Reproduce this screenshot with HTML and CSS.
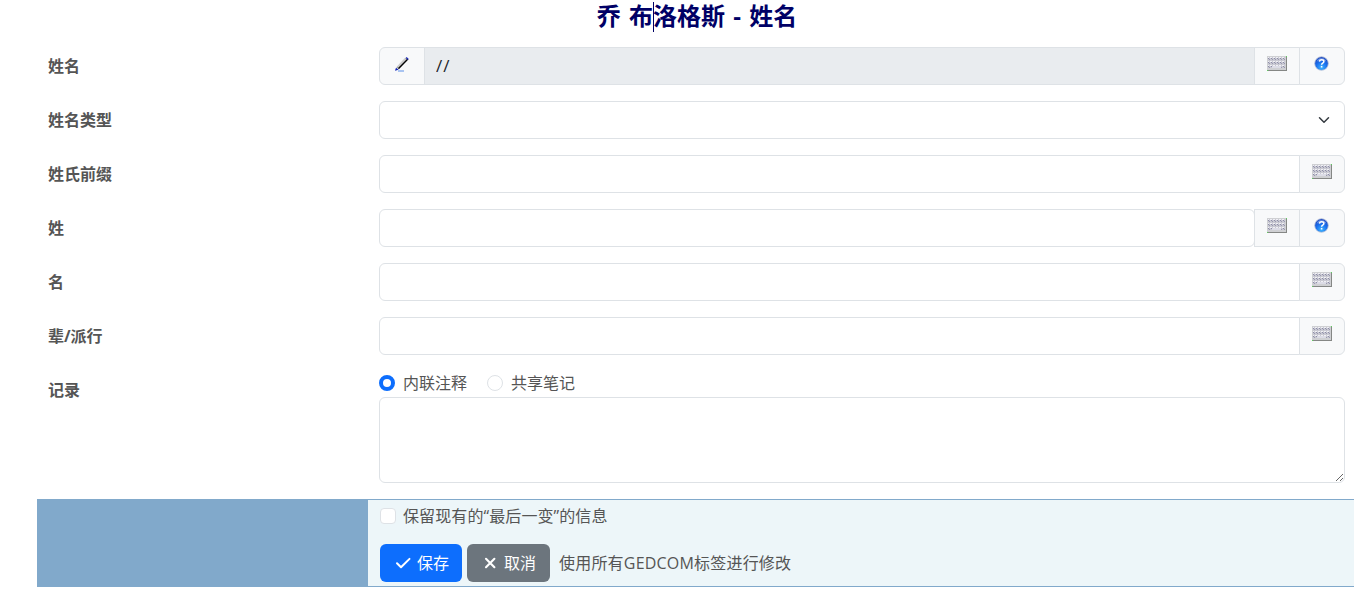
FILE: index.html
```html
<!DOCTYPE html>
<html lang="zh-Hans">
<head>
<meta charset="UTF-8">
<meta name="viewport" content="width=device-width, initial-scale=1.0">
<title>乔 布洛格斯 - 姓名</title>
<link rel="stylesheet" href="styles.css">
</head>
<body>
  <!-- shared icons -->
  <svg class="sprite" aria-hidden="true">
    <defs>
      <pattern id="keys" width="3" height="4" patternUnits="userSpaceOnUse">
        <rect width="3" height="4" fill="#c9c9d2"/>
        <rect x="0" y="1" width="2" height="1" fill="#f0f0f5"/>
        <rect x="1" y="2" width="1" height="1" fill="#8c8ca8"/>
        <rect x="2" y="3" width="1" height="1" fill="#9a9ab2"/>
      </pattern>
      <radialGradient id="ball" cx="50%" cy="80%" r="80%">
        <stop offset="0" stop-color="#3db4ff"/>
        <stop offset="0.5" stop-color="#1a70ee"/>
        <stop offset="1" stop-color="#1a40b8"/>
      </radialGradient>
    </defs>
    <symbol id="icon-keyboard" viewBox="0 0 20 15">
      <rect width="20" height="15" fill="#b4b5b4"/>
      <rect width="19" height="14" fill="#cfd0d3"/>
      <rect x="1" y="1" width="17" height="11" fill="url(#keys)"/>
      <rect x="5" y="10" width="9" height="2" fill="#dcdce6"/>
      <path d="M19.5 1v14M1 14.5h19" stroke="#858785" fill="none"/>
      <rect y="14" width="1" height="1" fill="#5fd35f"/>
      <rect x="19" width="1" height="1" fill="#5fd35f"/>
    </symbol>
    <symbol id="icon-help" viewBox="0 0 16 16">
      <circle cx="7.5" cy="7.5" r="6.8" fill="url(#ball)" stroke="#b4bfd6" stroke-width="0.8"/>
      <path d="M2.6 5.5a5.2 5.2 0 0 1 9.8 0q-4.9-2-9.8 0z" fill="#fff" opacity="0.3"/>
      <path d="M5.4 5.6Q5.6 3.8 7.7 3.8q2.2 0 2.2 1.7 0 1-1.2 1.7Q7.6 7.9 7.6 8.8" fill="none" stroke="#fff" stroke-width="1.5"/>
      <rect x="6.8" y="9.9" width="1.6" height="1.6" fill="#fff"/>
    </symbol>
  </svg>

  <div class="container">
    <h2 class="title">乔 布<span class="cursor"></span>洛格斯 - 姓名</h2>

    <form>
      <div class="row">
        <label class="label" for="name">姓名</label>
        <div class="field">
          <div class="group">
            <span class="addon">
              <svg class="pencil" width="16" height="16" viewBox="0 0 16 16">
                <path d="M3.6 12.3 12.7 2.8" stroke="#777" stroke-width="3"/>
                <path d="M3.4 11.4 11.8 2.6" stroke="#cfcfcf" stroke-width="1.6"/>
                <path d="M4.6 12.5 13.9 3.2" stroke="#000" stroke-width="1.2"/>
                <path d="M12.2 1.5l2.1 1.9" stroke="#1624b4" stroke-width="1.3"/>
                <path d="M1 14.8l1-3 2.6 2z" fill="#1021b8"/>
                <path d="M4 15h6" stroke="#5b8fe8" stroke-width="1"/>
              </svg>
            </span>
            <input class="control readonly" type="text" id="name" value="//" readonly>
            <span class="addon"><svg class="keyboard"><use href="#icon-keyboard"/></svg></span>
            <span class="addon"><svg class="help"><use href="#icon-help"/></svg></span>
          </div>
        </div>
      </div>

      <div class="row">
        <label class="label" for="type">姓名类型</label>
        <div class="field">
          <div class="group select">
            <select class="control rounded" id="type"><option></option></select>
            <svg class="chevron" width="16" height="12" viewBox="0 0 16 16"><path d="m2 5 6 6 6-6" fill="none" stroke="#343a40" stroke-width="2" stroke-linecap="round" stroke-linejoin="round"/></svg>
          </div>
        </div>
      </div>

      <div class="row">
        <label class="label" for="prefix">姓氏前缀</label>
        <div class="field">
          <div class="group">
            <input class="control" type="text" id="prefix">
            <span class="addon"><svg class="keyboard"><use href="#icon-keyboard"/></svg></span>
          </div>
        </div>
      </div>

      <div class="row">
        <label class="label" for="surname">姓</label>
        <div class="field">
          <div class="group">
            <input class="control rounded" type="text" id="surname">
            <span class="addon"><svg class="keyboard"><use href="#icon-keyboard"/></svg></span>
            <span class="addon"><svg class="help"><use href="#icon-help"/></svg></span>
          </div>
        </div>
      </div>

      <div class="row">
        <label class="label" for="given">名</label>
        <div class="field">
          <div class="group">
            <input class="control" type="text" id="given">
            <span class="addon"><svg class="keyboard"><use href="#icon-keyboard"/></svg></span>
          </div>
        </div>
      </div>

      <div class="row">
        <label class="label" for="generation">辈/派行</label>
        <div class="field">
          <div class="group">
            <input class="control" type="text" id="generation">
            <span class="addon"><svg class="keyboard"><use href="#icon-keyboard"/></svg></span>
          </div>
        </div>
      </div>

      <div class="row">
        <label class="label" for="note">记录</label>
        <div class="field">
          <div class="checks">
            <label class="check"><input type="radio" name="note-type" checked>内联注释</label>
            <label class="check"><input type="radio" name="note-type">共享笔记</label>
          </div>
          <textarea class="control" id="note" rows="3"></textarea>
        </div>
      </div>

      <div class="footer">
        <div class="footer-side"></div>
        <div class="footer-main">
          <label class="check"><input type="checkbox">保留现有的“最后一变”的信息</label>
          <div class="actions">
            <button class="btn btn-save" type="submit">
              <svg width="16" height="16" viewBox="0 0 16 16"><path d="M2 8.3l4 4 8.5-8.4" fill="none" stroke="#fff" stroke-width="2" stroke-linecap="round" stroke-linejoin="round"/></svg>
              保存
            </button>
            <button class="btn btn-cancel" type="button">
              <svg width="16" height="16" viewBox="0 0 16 16"><path d="M4 3.8l8.4 8.4M12.4 3.8 4 12.2" fill="none" stroke="#fff" stroke-width="2.1" stroke-linecap="round"/></svg>
              取消
            </button>
            <a class="all-tags">使用所有GEDCOM标签进行修改</a>
          </div>
        </div>
      </div>
    </form>
  </div>
</body>
</html>
```
FILE: styles.css
```css
* {
  box-sizing: border-box;
}

body {
  margin: 0;
  background: #fff;
  color: #555;
  font-family: "Open Sans", "Noto Sans CJK SC", sans-serif;
  font-size: 16px;
  line-height: 24px;
  overflow: hidden;
}

.sprite {
  position: absolute;
  width: 0;
  height: 0;
}

.container {
  width: 1320px;
  margin-left: 37px;
}

.title {
  height: 47px;
  margin: 0;
  padding-top: 1px;
  color: #006;
  font-size: 24px;
  line-height: 29px;
  font-weight: 700;
  text-align: center;
  word-spacing: 2px;
}

.cursor {
  display: inline-block;
  width: 1px;
  height: 30px;
  margin: -3px -1px 0 0;
  background: #006;
  vertical-align: -7px;
}

.row {
  display: flex;
  margin-bottom: 16px;
}

.label {
  width: 330px;
  padding: 7px 12px 7px 11px;
  font-weight: 700;
}

.field {
  width: 990px;
  padding: 0 12px;
}

.group {
  display: flex;
  height: 38px;
}

.control {
  display: block;
  flex: 1;
  width: 100%;
  min-width: 0;
  margin: 0;
  padding: 6px 12px;
  border: 1px solid #dee2e6;
  border-radius: 6px;
  background: #fff;
  color: #212529;
  font: inherit;
  outline: none;
}

.group .control:not(:last-child):not(.rounded) {
  border-top-right-radius: 0;
  border-bottom-right-radius: 0;
}

.group .control:not(:first-child) {
  border-top-left-radius: 0;
  border-bottom-left-radius: 0;
}

.group .readonly {
  padding-left: 11px;
  background: #e9ecef;
  font-size: 17px;
  letter-spacing: 1px;
}

.addon {
  display: flex;
  justify-content: center;
  width: 46px;
  padding-top: 8px;
  border: 1px solid #dee2e6;
  background: #f8f9fa;
}

.addon:first-child {
  margin-right: -1px;
  border-radius: 6px 0 0 6px;
}

.addon:not(:first-child) {
  margin-left: -1px;
}

.addon:last-child {
  border-radius: 0 6px 6px 0;
}

.keyboard {
  width: 20px;
  height: 15px;
}

.help {
  width: 16px;
  height: 16px;
}

.select {
  position: relative;
}

.select .control {
  appearance: none;
}

.chevron {
  position: absolute;
  top: 13px;
  right: 13px;
}

.checks {
  display: flex;
  gap: 20px;
  height: 26px;
}

.check {
  display: flex;
  align-items: flex-start;
}

.check input {
  appearance: none;
  width: 16px;
  height: 16px;
  margin: 4px 8px 0 0;
  border: 1px solid #dee2e6;
  border-radius: 4px;
  background: #fff;
}

.check input[type="checkbox"] {
  margin-right: 7px;
}

.check input[type="radio"] {
  border-radius: 50%;
}

.check input[type="radio"]:checked {
  border: 4px solid #0d6efd;
}

textarea.control {
  height: 86px;
  resize: vertical;
}

.footer {
  display: flex;
  height: 88px;
  border-top: 1px solid #81a9cb;
  border-bottom: 1px solid #81a9cb;
}

.footer-side {
  width: 331px;
  background: #81a9cb;
}

.footer-main {
  flex: 1;
  padding: 4px 12px;
  background: #edf6f9;
}

.footer-main .check {
  letter-spacing: 0.1px;
}

.actions {
  display: flex;
  align-items: center;
  margin-top: 16px;
}

.btn {
  display: flex;
  align-items: center;
  height: 38px;
  margin-right: 5px;
  padding: 0 12px 0 15px;
  border: 0;
  border-radius: 6px;
  color: #fff;
  font: inherit;
}

.btn svg {
  margin-right: 6px;
}

.btn-save {
  width: 82px;
  background: #0d6efd;
}

.btn-cancel {
  width: 83px;
  background: #6c757d;
}

.all-tags {
  margin-left: 4px;
  letter-spacing: 0.2px;
}
```
